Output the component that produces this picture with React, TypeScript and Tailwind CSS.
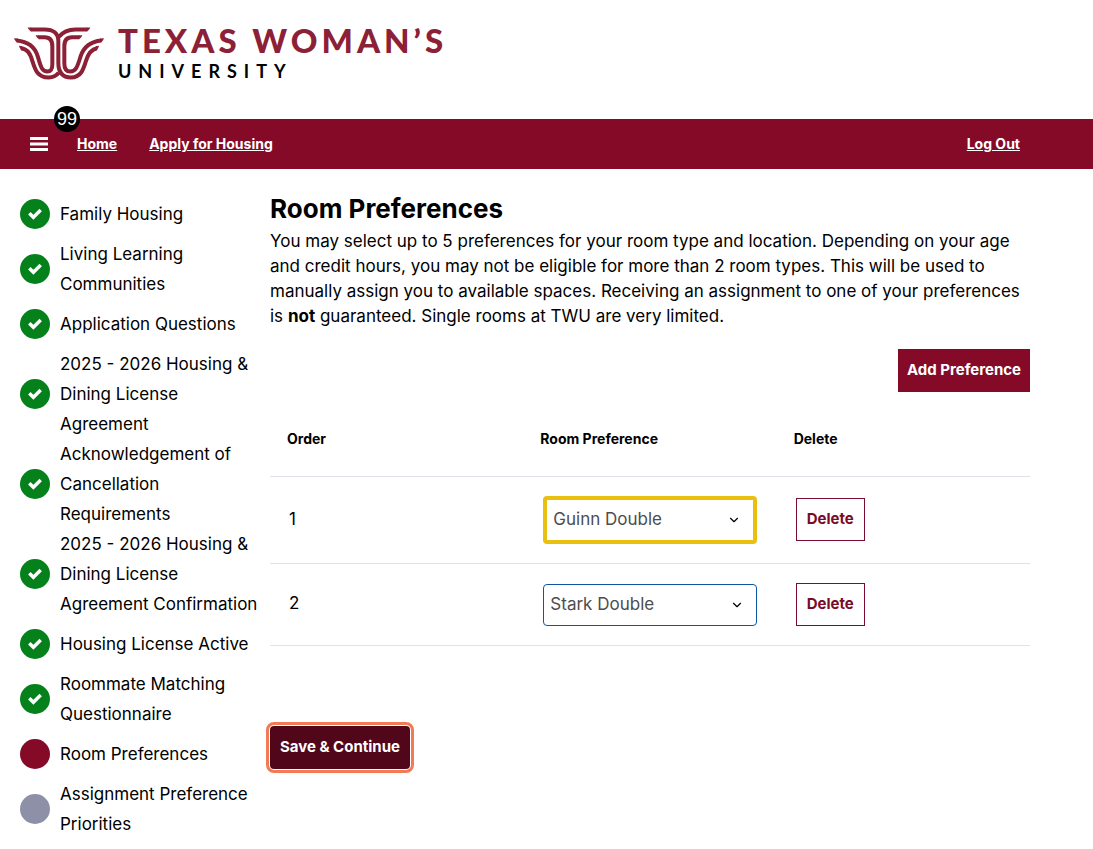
import { useState } from "react";
import { FiChevronDown } from "react-icons/fi";
import clsx from "clsx";

type StepStatus = "done" | "current" | "upcoming";

interface Step {
  label: string;
  status: StepStatus;
  // long labels sit flush against the next step
  tight?: boolean;
}

const STEPS: Step[] = [
  { label: "Family Housing", status: "done" },
  { label: "Living Learning\nCommunities", status: "done" },
  { label: "Application Questions", status: "done" },
  {
    label: "2025 - 2026 Housing &\nDining License\nAgreement",
    status: "done",
    tight: true,
  },
  {
    label: "Acknowledgement of\nCancellation\nRequirements",
    status: "done",
    tight: true,
  },
  {
    label: "2025 - 2026 Housing &\nDining License\nAgreement Confirmation",
    status: "done",
  },
  { label: "Housing License Active", status: "done" },
  { label: "Roommate Matching\nQuestionnaire", status: "done" },
  { label: "Room Preferences", status: "current" },
  { label: "Assignment Preference\nPriorities", status: "upcoming" },
];

const ROOMS = ["Guinn Double", "Stark Double"];

function Logo() {
  return (
    <a href="#" className="flex items-start gap-[14px]">
      <svg
        viewBox="42 48 270 164"
        className="mt-[5px] h-[55px] w-[90px]"
        fill="none"
        stroke="#8c2036"
        strokeWidth="12"
        aria-hidden="true"
      >
        <path d="M92 58H134C160 58 175 70 175 92V158C175 190 191 202 213 202C243 202 250 178 258 152C265 128 275 117 291 114" />
        <path d="M262 58H226C204 58 188 66 177 80" />
        <path d="M63 114C82 117 90 128 97 152C105 178 112 202 146 202C160 202 169 197 176 188" />
        <path d="M50 91C82 94 104 108 113 138C122 166 124 184 142 184C154 184 157 176 157 162V108C157 90 149 81 134 81H116" />
        <path d="M304 91C272 94 252 108 242 138C233 166 229 184 211 184C198 184 193 175 193 160V108C193 90 201 81 216 81H238" />
        {/* tapered stroke ends */}
        <g fill="#8c2036" stroke="none">
          <path d="M83 52H94V64C89 62 85 57 83 52Z" />
          <path d="M271 52H260V64C265 62 269 57 271 52Z" />
          <path d="M107 75H118V87C113 85 109 80 107 75Z" />
          <path d="M247 75H236V87C241 85 245 80 247 75Z" />
          <path d="M42 84L54 85L52 97C47 94 44 89 42 84Z" />
          <path d="M312 84L300 85L302 97C307 94 310 89 312 84Z" />
          <path d="M57 107L67 108L64 120C60 116 58 112 57 107Z" />
          <path d="M297 107L287 108L290 120C294 116 296 112 297 107Z" />
        </g>
      </svg>
      <span className="flex flex-col font-['Lato']">
        <span className="text-[33px] leading-[38px] font-black tracking-[4px] text-[#8c2036]">
          TEXAS WOMAN’S
        </span>
        <span className="text-lg leading-6 font-bold tracking-[7px] text-black">
          UNIVERSITY
        </span>
      </span>
    </a>
  );
}

function NavBar() {
  return (
    <nav className="relative flex h-[50px] items-center bg-[#840a28] pr-[73px] pl-[30px] text-sm font-bold text-white">
      <button type="button" aria-label="Menu" className="mr-[29px]">
        <svg viewBox="0 0 18 16" className="h-4 w-[18px]" fill="currentColor">
          <path d="M0 1H18V4H0ZM0 6.5H18V9.5H0ZM0 12H18V15H0Z" />
        </svg>
      </button>
      <a href="#" className="mr-8 underline">
        Home
      </a>
      <a href="#" className="underline">
        Apply for Housing
      </a>
      <a href="#" className="ml-auto underline">
        Log Out
      </a>
      <span className="absolute -top-[13px] left-[54px] flex size-[26px] items-center justify-center rounded-full bg-black font-['Liberation_Sans'] text-lg font-normal">
        99
      </span>
    </nav>
  );
}

function StepItem({ step }: { step: Step }) {
  return (
    <li className={clsx("flex items-center gap-[10px]", !step.tight && "mb-[10px]")}>
      <span
        className={clsx(
          "flex size-[30px] shrink-0 items-center justify-center rounded-full text-white",
          step.status === "done" && "bg-[#04811a]",
          step.status === "current" && "bg-[#840a28]",
          step.status === "upcoming" && "bg-[#8d90a7]",
        )}
      >
        {step.status === "done" && (
          <svg
            viewBox="0 0 14 12"
            className="h-3 w-[14px]"
            fill="none"
            stroke="currentColor"
            strokeWidth="3.4"
            aria-hidden="true"
          >
            <path d="M1.3 5.2L5.4 9.3L12.7 2" />
          </svg>
        )}
      </span>
      <a href="#" className="leading-[30px] whitespace-pre">
        {step.label}
      </a>
    </li>
  );
}

function RoomRow({
  order,
  room,
  highlighted,
}: {
  order: number;
  room: string;
  highlighted: boolean;
}) {
  const [value, setValue] = useState(room);

  return (
    <tr className="border-b border-[#dee2e6]">
      <td className="px-[19px]">{order}</td>
      <td className={clsx("px-5", highlighted ? "py-[19px]" : "pt-5 pb-[19px]")}>
        <div className="relative">
          <select
            aria-label={`Room preference ${order}`}
            value={value}
            onChange={(e) => setValue(e.target.value)}
            className={clsx(
              "block w-full appearance-none rounded-sm bg-white px-[6px] text-[#4d4d4d]",
              highlighted
                ? "h-12 border-4 border-[#e9c010]"
                : "h-[42px] border border-[#0b57a4]",
            )}
          >
            {ROOMS.map((r) => (
              <option key={r}>{r}</option>
            ))}
          </select>
          <FiChevronDown
            size={14}
            className={clsx(
              "pointer-events-none absolute top-1/2 -translate-y-1/2 text-black",
              highlighted ? "right-4" : "right-[13px]",
            )}
          />
        </div>
      </td>
      <td className="px-[19px]">
        <button
          type="button"
          className="block h-[43px] border border-[#7a0c33] px-[10px] text-[15px] font-bold text-[#7a0c28]"
        >
          Delete
        </button>
      </td>
    </tr>
  );
}

export default function App() {
  return (
    <div className="bg-white font-['Inter',sans-serif] text-[17px] text-black">
      <header className="h-[119px] pt-[21px] pl-[14px]">
        <Logo />
      </header>
      <NavBar />

      <div className="flex">
        <aside className="w-[270px] shrink-0 pt-[30px] pl-5">
          <ol>
            {STEPS.map((step) => (
              <StepItem key={step.label} step={step} />
            ))}
          </ol>
        </aside>

        <main className="min-w-0 flex-1 pt-5 pr-[63px]">
          <h1 className="text-[26px] leading-10 font-bold">Room Preferences</h1>
          <p className="leading-[25px]">
            You may select up to 5 preferences for your room type and location.
            Depending on your age and credit hours, you may not be eligible for
            more than 2 room types. This will be used to manually assign you to
            available spaces. Receiving an assignment to one of your
            preferences is <strong>not</strong> guaranteed. Single rooms at TWU
            are very limited.
          </p>

          <div className="mt-5 flex justify-end">
            <button
              type="button"
              className="h-[43px] bg-[#840a28] px-[9px] text-[15px] font-bold text-white"
            >
              Add Preference
            </button>
          </div>

          <table className="mt-[10px] w-full table-fixed border-collapse">
            <thead>
              <tr className="h-[74px] border-b border-[#dee2e6] text-left text-sm">
                <th className="px-[17px]">Order</th>
                <th className="px-[17px]">Room Preference</th>
                <th className="px-[17px]">Delete</th>
              </tr>
            </thead>
            <tbody>
              <RoomRow order={1} room="Guinn Double" highlighted />
              <RoomRow order={2} room="Stark Double" highlighted={false} />
            </tbody>
          </table>

          <button
            type="button"
            className="mt-20 h-[43px] rounded-sm bg-[#52061a] px-[10px] text-[15px] font-bold text-white outline-3 outline-offset-1 outline-[#f27a54]"
          >
            Save &amp; Continue
          </button>
        </main>
      </div>
    </div>
  );
}
